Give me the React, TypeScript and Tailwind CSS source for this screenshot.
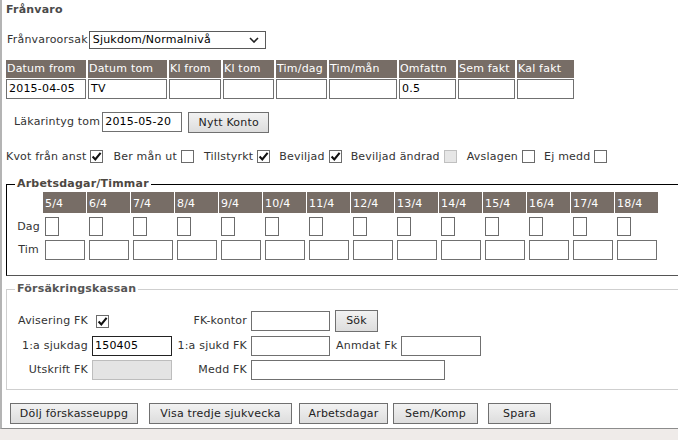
import React from "react";

const cols = ["Datum from", "Datum tom", "Kl from", "Kl tom", "Tim/dag", "Tim/mån", "Omfattn", "Sem fakt", "Kal fakt"];
const vals = ["2015-04-05", "TV", "", "", "", "", "0.5", "", ""];
const days = ["5/4", "6/4", "7/4", "8/4", "9/4", "10/4", "11/4", "12/4", "13/4", "14/4", "15/4", "16/4", "17/4", "18/4"];

function Field({ className = "", value = "" }: { className?: string; value?: string }) {
  return (
    <div className={"flex items-center border bg-white px-[2px] text-black " + className}>
      {value}
    </div>
  );
}

function Check({ checked = false, disabled = false }: { checked?: boolean; disabled?: boolean }) {
  return (
    <span
      className={
        "flex h-[13px] w-[13px] shrink-0 items-center justify-center border " +
        (disabled ? "border-[#c0c0c0] bg-[#e6e6e6]" : "border-[#6b6b6b] bg-white")
      }
    >
      {checked && (
        <svg width="11" height="11" viewBox="0 0 11 11">
          <path d="M1.6 5.6 L4.3 8.4 L9.6 1.8" fill="none" stroke="#111" strokeWidth="2.1" />
        </svg>
      )}
    </span>
  );
}

function Btn({ label, className = "" }: { label: string; className?: string }) {
  return (
    <button
      className={
        "flex shrink-0 items-center justify-center border border-[#707070] bg-gradient-to-b from-[#f2f2f2] to-[#dddddd] text-[11px] tracking-[0.2px] text-[#222] " +
        className
      }
    >
      {label}
    </button>
  );
}

export default function App() {
  return (
    <div className="h-[440px] w-[678px] overflow-hidden bg-[#efebe9] font-['DejaVu_Sans',Verdana,sans-serif] text-[11px] leading-[14px] tracking-[0.2px] text-[#333]">
      <div className="flex h-[429px] w-[700px] flex-col border-b border-l-2 border-b-[#8c8c8c] border-l-[#b4b4b4] bg-white pl-[4px]">
        <div className="pt-[3px] font-bold text-[#4a4a4a]">Frånvaro</div>

        {/* orsak */}
        <div className="mt-[14px] flex items-center">
          <span className="pl-[1px]">Frånvaroorsak</span>
          <div className="ml-[1px] flex h-[18px] w-[177px] items-center justify-between border border-[#5a5a5a] pl-[3px] pr-[6px] text-black">
            <span>Sjukdom/Normalnivå</span>
            <svg width="10" height="6" viewBox="0 0 10 6">
              <path d="M1 1 L5 5 L9 1" fill="none" stroke="#222" strokeWidth="1.6" />
            </svg>
          </div>
        </div>

        {/* perioder */}
        <div className="mt-[11px] grid w-max grid-cols-[80px_79px_52px_51px_51px_68px_57px_57px_57px] gap-x-[2px] gap-y-[1px]">
          {cols.map((c) => (
            <div key={c} className="h-[18px] bg-[#776d66] pl-[1px] leading-[18px] text-white">
              {c}
            </div>
          ))}
          {vals.map((v, i) => (
            <Field key={i} value={v} className="h-[20px] border-[#707070]" />
          ))}
        </div>

        <div className="mt-[13px] flex items-start">
          <span className="pl-[8px] leading-[20px]">Läkarintyg tom</span>
          <Field value="2015-05-20" className="ml-[2px] h-[20px] w-[80px] border-[#707070]" />
          <Btn label="Nytt Konto" className="ml-[6px] h-[21px] w-[81px]" />
        </div>

        <div className="mt-[16px] flex h-[15px] items-center">
          <span>Kvot från anst</span>
          <span className="ml-[4px]"><Check checked /></span>
          <span className="ml-[10px]">Ber mån ut</span>
          <span className="ml-[4px]"><Check /></span>
          <span className="ml-[10px]">Tillstyrkt</span>
          <span className="ml-[4px]"><Check checked /></span>
          <span className="ml-[9px]">Beviljad</span>
          <span className="ml-[4px]"><Check checked /></span>
          <span className="ml-[9px]">Beviljad ändrad</span>
          <span className="ml-[4px]"><Check disabled /></span>
          <span className="ml-[10px]">Avslagen</span>
          <span className="ml-[4px]"><Check /></span>
          <span className="ml-[9px]">Ej medd</span>
          <span className="ml-[4px]"><Check /></span>
        </div>

        {/* arbetsdagar */}
        <fieldset className="mt-[13px] border border-black border-b-[#555] pb-[15px] pt-[1px]">
          <legend className="ml-[8px] px-[2px] font-bold text-[#4d4741]">Arbetsdagar/Timmar</legend>
          <div className="grid w-max grid-cols-[35px_repeat(14,43px)] gap-x-[1px] gap-y-[4px]">
            <div />
            {days.map((d) => (
              <div key={d} className="h-[21px] bg-[#776d66] pl-[2px] pt-[5px] text-white">
                {d}
              </div>
            ))}
            <div className="flex h-[19px] items-center justify-end pr-[2px]">Dag</div>
            {days.map((d) => (
              <div key={d} className="pl-[2px]">
                <div className="h-[19px] w-[14px] border border-[#6b6b6b] bg-white" />
              </div>
            ))}
            <div className="flex h-[20px] items-center justify-end pr-[3px]">Tim</div>
            {days.map((d) => (
              <div key={d} className="pl-[2px]">
                <Field className="h-[20px] w-[40px] border-[#707070]" />
              </div>
            ))}
          </div>
        </fieldset>

        {/* försäkringskassan */}
        <fieldset className="mt-[6px] border border-[#cfcfcf] pb-[9px] pt-[14px]">
          <legend className="ml-[8px] px-[2px] font-bold text-[#555]">Försäkringskassan</legend>
          <div className="grid grid-cols-[81px_84px_79px_1fr] items-center gap-y-[4px]">
            <div className="text-right">Avisering FK</div>
            <div className="pl-[8px]"><Check checked /></div>
            <div className="pr-[4px] text-right">FK-kontor</div>
            <div className="flex items-center">
              <Field className="h-[20px] w-[79px] border-[#707070]" />
              <Btn label="Sök" className="ml-[5px] h-[22px] w-[43px]" />
            </div>

            <div className="text-right">1:a sjukdag</div>
            <div className="pl-[4px]">
              <Field value="150405" className="h-[20px] w-[80px] border-[#222]" />
            </div>
            <div className="pr-[4px] text-right">1:a sjukd FK</div>
            <div className="flex items-center">
              <Field className="h-[20px] w-[79px] border-[#707070]" />
              <span className="ml-[6px]">Anmdat Fk</span>
              <Field className="ml-[4px] h-[20px] w-[80px] border-[#707070]" />
            </div>

            <div className="text-right">Utskrift FK</div>
            <div className="pl-[4px]">
              <div className="h-[20px] w-[80px] border border-[#bdbdbd] bg-[#e4e4e4]" />
            </div>
            <div className="pr-[4px] text-right">Medd FK</div>
            <div>
              <Field className="h-[20px] w-[194px] border-[#707070]" />
            </div>
          </div>
        </fieldset>

        <div className="mt-[13px] flex">
          <Btn label="Dölj förskasseuppg" className="ml-[4px] h-[21px] w-[128px]" />
          <Btn label="Visa tredje sjukvecka" className="ml-[11px] h-[21px] w-[143px]" />
          <Btn label="Arbetsdagar" className="ml-[7px] h-[21px] w-[89px]" />
          <Btn label="Sem/Komp" className="ml-[5px] h-[21px] w-[85px]" />
          <Btn label="Spara" className="ml-[10px] h-[21px] w-[63px]" />
        </div>
      </div>
    </div>
  );
}
